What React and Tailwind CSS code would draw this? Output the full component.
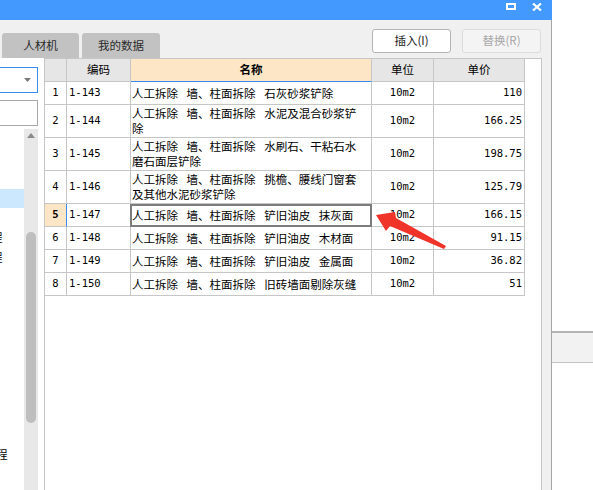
const rows = [
  { n: '1', code: '1-143', name: ['人工拆除 墙、柱面拆除 石灰砂浆铲除'], price: '110' },
  { n: '2', code: '1-144', name: ['人工拆除 墙、柱面拆除 水泥及混合砂浆铲', '除'], price: '166.25' },
  { n: '3', code: '1-145', name: ['人工拆除 墙、柱面拆除 水刷石、干粘石水', '磨石面层铲除'], price: '198.75' },
  { n: '4', code: '1-146', name: ['人工拆除 墙、柱面拆除 挑檐、腰线门窗套', '及其他水泥砂浆铲除'], price: '125.79' },
  { n: '5', code: '1-147', name: ['人工拆除 墙、柱面拆除 铲旧油皮 抹灰面'], price: '166.15', sel: true },
  { n: '6', code: '1-148', name: ['人工拆除 墙、柱面拆除 铲旧油皮 木材面'], price: '91.15' },
  { n: '7', code: '1-149', name: ['人工拆除 墙、柱面拆除 铲旧油皮 金属面'], price: '36.82' },
  { n: '8', code: '1-150', name: ['人工拆除 墙、柱面拆除 旧砖墙面剔除灰缝'], price: '51' },
]

const mono = "font-['DejaVu_Sans_Mono',monospace] text-[10.5px]"

function Row({ r }) {
  const tall = r.name.length > 1
  return (
    <div className={tall ? 'flex h-[33px]' : 'flex h-[23px]'}>
      <div
        className={
          r.sel
            ? `flex w-[22px] items-center justify-center border-b border-r border-b-[#c6c6c6] border-r-[#3c8cf0] bg-[#fde6c6] font-bold ${mono}`
            : `flex w-[22px] items-center justify-center border-b border-r border-b-[#c6c6c6] border-r-[#c6c6c6] ${mono}`
        }
      >
        {r.n}
      </div>
      <div className={`flex w-[64px] items-center border-b border-r border-[#c6c6c6] pl-[2px] ${mono}`}>{r.code}</div>
      <div className="relative flex w-[241px] items-center border-b border-r border-[#c6c6c6] pl-[1px] leading-[15px] whitespace-nowrap [word-spacing:6px]">
        <div>
          {r.name.map((l, i) => (
            <div key={i}>{l}</div>
          ))}
        </div>
        {r.sel && <div className="absolute -left-px top-0 -right-px -bottom-px border-2 border-[#7c7c7c]" />}
      </div>
      <div className={`flex w-[62px] items-center justify-center border-b border-r border-[#c6c6c6] ${mono}`}>10m2</div>
      <div className={`flex w-[91px] items-center justify-end border-b border-r border-[#c6c6c6] pr-[2px] ${mono}`}>{r.price}</div>
    </div>
  )
}

export default function App() {
  return (
    <div className="relative flex h-[490px] w-[593px] overflow-hidden bg-white font-['Noto_Sans_CJK_SC',sans-serif] text-[11.5px] text-black">
      {/* window */}
      <div className="flex w-[552px] flex-col">
        {/* title bar */}
        <div className="flex h-[20px] items-start justify-end gap-[16px] bg-[#4499ff] pr-[9px] pt-[3px]">
          <span className="block h-[7px] w-[10px] border-2 border-white" />
          <svg width="10" height="8" viewBox="0 0 10 8" className="mr-[1px]">
            <path d="M1 0.5 L9 7.5 M9 0.5 L1 7.5" stroke="white" strokeWidth="2.2" />
          </svg>
        </div>

        <div className="flex flex-1 flex-col border-r border-[#a6a6a6] bg-[#f0f0f0]">
          {/* toolbar */}
          <div className="flex h-[38px] justify-between pr-[10px]">
            <div className="flex items-end gap-[3px] pl-[2px]">
              <div className="flex h-[25px] w-[77px] items-center justify-center rounded-t-[3px] bg-[#c2c2c2] text-[#2a2a2a]">人材机</div>
              <div className="flex h-[25px] w-[78px] items-center justify-center rounded-t-[3px] bg-[#c2c2c2] text-[#2a2a2a]">我的数据</div>
            </div>
            <div className="flex items-start gap-[11px] pt-[9px]">
              <button className="flex h-[24px] w-[79px] items-center justify-center rounded-[3px] border border-[#b4b4b4] bg-white text-[#1a1a1a]">插入(I)</button>
              <button className="flex h-[24px] w-[79px] items-center justify-center rounded-[3px] border border-[#dcdcdc] bg-[#f4f4f4] text-[#a8a8a8]">替换(R)</button>
            </div>
          </div>

          {/* content */}
          <div className="flex flex-1">
            {/* left panel */}
            <div className="flex w-[44px] flex-col bg-white">
              <div className="mt-[9px] flex h-[26px] w-[38px] items-center justify-end border border-l-0 border-[#3c8cf0] pr-[6px]">
                <svg width="7" height="4" viewBox="0 0 7 4">
                  <path d="M0 0 H7 L3.5 4 Z" fill="#7a7a7a" />
                </svg>
              </div>
              <div className="mt-[7px] h-[26px] w-[38px] border border-l-0 border-[#a8a8a8]" />
              <div className="mt-[3px] flex flex-1">
                <div className="flex w-[24px] flex-col overflow-hidden">
                  <div className="h-[60px]" />
                  <div className="h-[19px] bg-[#cce8ff]" />
                  <div className="h-[20px]" />
                  <div className="flex h-[20px] items-center whitespace-nowrap"><span className="-ml-[9px]">程</span></div>
                  <div className="flex h-[20px] items-center whitespace-nowrap"><span className="-ml-[9px]">程</span></div>
                  <div className="h-[177px]" />
                  <div className="flex h-[19px] items-center whitespace-nowrap"><span className="-ml-[4px]">程</span></div>
                </div>
                <div className="flex w-[14px] flex-col items-center bg-[#e8e8e8]">
                  <svg width="8" height="5" viewBox="0 0 8 5" className="mt-[4px]">
                    <path d="M0 5 H8 L4 0 Z" fill="#8a8a8a" />
                  </svg>
                  <div className="mt-[94px] h-[191px] w-[10px] rounded-full bg-[#bebebe]" />
                </div>
              </div>
            </div>

            {/* grid pane */}
            <div className="w-[498px] border-x border-t border-[#c6c6c6] bg-white">
              <div className="flex h-[23px]">
                <div className="w-[22px] border-b border-r border-[#c6c6c6] bg-[#e6e6e6]" />
                <div className="flex w-[64px] items-center justify-center border-b border-r border-[#c6c6c6] bg-[#e6e6e6]">编码</div>
                <div className="flex w-[241px] items-center justify-center border-b border-r border-b-[#3c8cf0] border-r-[#c6c6c6] bg-[#fde6c6] font-bold">名称</div>
                <div className="flex w-[62px] items-center justify-center border-b border-r border-[#c6c6c6] bg-[#e6e6e6]">单位</div>
                <div className="flex w-[91px] items-center justify-center border-b border-r border-[#c6c6c6] bg-[#e6e6e6]">单价</div>
              </div>
              {rows.map((r) => (
                <Row key={r.n} r={r} />
              ))}
            </div>
            <div className="flex-1" />
          </div>
        </div>
      </div>

      {/* outside the window */}
      <div className="flex-1">
        <div className="mt-[331px] h-[32px] border-t-2 border-b border-t-[#b4b4b4] border-b-[#c4c4c4] bg-[#f2f2f2]" />
      </div>

      {/* red annotation arrow */}
      <svg className="absolute left-0 top-0" width="593" height="490" viewBox="0 0 593 490">
        <polygon points="376,215 395,212 396,218 446,246 444,249 390,226 386,231" fill="#f0342a" />
      </svg>
    </div>
  )
}
